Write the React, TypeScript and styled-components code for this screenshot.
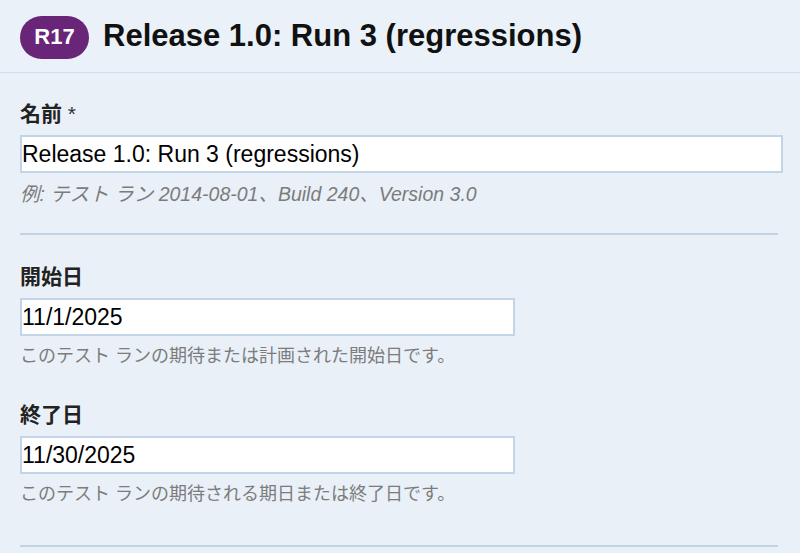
import React from "react";
import styled, { createGlobalStyle } from "styled-components";

const Global = createGlobalStyle`
  html, body { margin: 0; padding: 0; background: #e9f0f7; }
  body { font-family: "Liberation Sans", "Noto Sans CJK JP", sans-serif; color: #111; }
  * { box-sizing: border-box; }
`;

const Page = styled.div`
  width: 800px;
  height: 553px;
  overflow: hidden;
  background: #e9f0f7;
`;

const Header = styled.header`
  height: 73px;
  display: flex;
  align-items: center;
  gap: 14px;
  padding: 0 0 0 20px;
  background: #eaf1f8;
  border-bottom: 1px solid #d3dde8;
`;

const Badge = styled.span`
  display: inline-flex;
  align-items: center;
  justify-content: center;
  width: 69px;
  height: 43px;
  margin-top: 2px;
  border-radius: 22px;
  background: #692577;
  color: #fff;
  font-family: "Liberation Sans", sans-serif;
  font-weight: 700;
  font-size: 22px;
`;

const Title = styled.h1`
  margin: 0;
  font-family: "Liberation Sans", sans-serif;
  font-weight: 700;
  font-size: 31px;
  color: #111;
`;

const Form = styled.div`
  padding: 0 17px 0 20px;
`;

const Field = styled.div<{ $top: number }>`
  display: flex;
  flex-direction: column;
  padding-top: ${(p) => p.$top}px;
`;

const Label = styled.label`
  font-family: "Liberation Sans", "Noto Sans CJK JP", sans-serif;
  font-weight: 700;
  font-size: 21px;
  line-height: 28px;
  color: #222;
`;

const Required = styled.span`
  font-weight: 400;
  color: #333;
`;

const Input = styled.input<{ $w?: number }>`
  margin-top: 7px;
  width: ${(p) => (p.$w ? `${p.$w}px` : "100%")};
  height: 38px;
  padding: 0;
  border: 2px solid #c2d5e8;
  background: #fff;
  font-family: "Liberation Sans", sans-serif;
  font-size: 23px;
  color: #000;
  outline: none;
`;

const Hint = styled.div<{ $italic?: boolean }>`
  margin-top: ${(p) => (p.$italic ? 9 : 8)}px;
  font-family: "Liberation Sans", "Noto Sans CJK JP", sans-serif;
  font-size: ${(p) => (p.$italic ? 19.5 : 18)}px;
  line-height: 24px;
  color: #7c7c7c;
  font-style: ${(p) => (p.$italic ? "italic" : "normal")};
`;

const Divider = styled.hr<{ $top: number }>`
  margin: ${(p) => p.$top}px 5px 0 0;
  border: 0;
  height: 2px;
  background: #c0d4e7;
`;

export default function App() {
  return (
    <Page>
      <Global />
      <Header>
        <Badge>R17</Badge>
        <Title>Release 1.0: Run 3 (regressions)</Title>
      </Header>
      <Form>
        <Field $top={27}>
          <Label>
            名前 <Required>*</Required>
          </Label>
          <Input defaultValue="Release 1.0: Run 3 (regressions)" />
          <Hint $italic>例: テスト ラン 2014-08-01、Build 240、Version 3.0</Hint>
        </Field>
        <Divider $top={27} />
        <Field $top={28}>
          <Label>開始日</Label>
          <Input $w={495} defaultValue="11/1/2025" />
          <Hint>このテスト ランの期待または計画された開始日です。</Hint>
        </Field>
        <Field $top={33}>
          <Label>終了日</Label>
          <Input $w={495} defaultValue="11/30/2025" />
          <Hint>このテスト ランの期待される期日または終了日です。</Hint>
        </Field>
        <Divider $top={39} />
      </Form>
    </Page>
  );
}
